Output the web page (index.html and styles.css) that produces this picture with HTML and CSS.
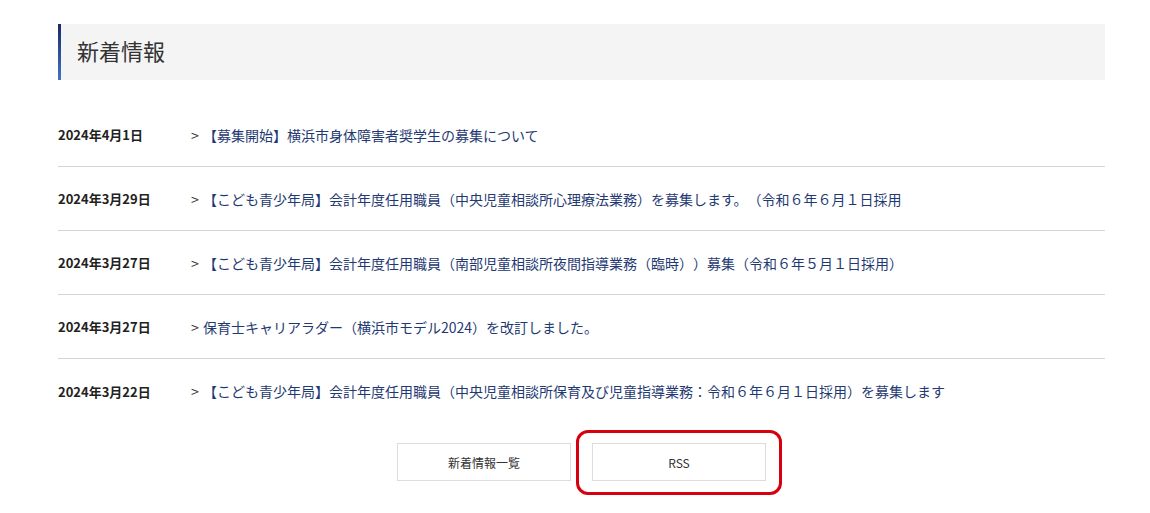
FILE: index.html
```html
<!DOCTYPE html>
<html lang="ja">
<head>
    <meta charset="UTF-8">
    <meta name="viewport" content="width=device-width, initial-scale=1.0">
    <title>新着情報</title>
    <link rel="stylesheet" href="styles.css">
</head>
<body>
    <div class="news">
        <h2 class="news-title">新着情報</h2>
        <ul class="news-list">
            <li class="news-item">
                <span class="news-date">2024年4月1日</span>
                <a class="news-link" href="#">【募集開始】横浜市身体障害者奨学生の募集について</a>
            </li>
            <li class="news-item">
                <span class="news-date">2024年3月29日</span>
                <a class="news-link" href="#">【こども青少年局】会計年度任用職員（中央児童相談所心理療法業務）を募集します。（令和６年６月１日採用</a>
            </li>
            <li class="news-item">
                <span class="news-date">2024年3月27日</span>
                <a class="news-link" href="#">【こども青少年局】会計年度任用職員（南部児童相談所夜間指導業務（臨時））募集（令和６年５月１日採用）</a>
            </li>
            <li class="news-item">
                <span class="news-date">2024年3月27日</span>
                <a class="news-link" href="#">保育士キャリアラダー（横浜市モデル2024）を改訂しました。</a>
            </li>
            <li class="news-item">
                <span class="news-date">2024年3月22日</span>
                <a class="news-link" href="#">【こども青少年局】会計年度任用職員（中央児童相談所保育及び児童指導業務：令和６年６月１日採用）を募集します</a>
            </li>
        </ul>
        <div class="news-buttons">
            <a class="btn" href="#">新着情報一覧</a>
            <a class="btn btn-marked" href="#">RSS</a>
        </div>
    </div>
</body>
</html>
```

FILE: styles.css
```css
body {
    font-family: "Noto Sans CJK JP", "Noto Sans", sans-serif;
    color: #222222;
    background: #ffffff;
    margin: 0;
    padding: 24px 0 32px 58px;
    text-spacing-trim: space-all;
}

.news {
    width: 1047px;
}

.news-title {
    position: relative;
    margin: 0;
    height: 56px;
    line-height: 52px;
    padding-left: 19px;
    background-color: #f4f4f4;
    font-size: 22px;
    font-weight: normal;
    color: #333333;
}

.news-title::before {
    content: "";
    position: absolute;
    left: 0;
    top: 0;
    bottom: 0;
    width: 3px;
    background: linear-gradient(#1b2a66, #3e74c4);
}

.news-list {
    list-style: none;
    margin: 23px 0 0;
    padding: 0;
}

.news-item {
    display: flex;
    align-items: center;
    height: 64px;
    border-bottom: 1px solid #d4d4d4;
    box-sizing: border-box;
}

.news-item:last-child {
    border-bottom: none;
}

.news-date {
    width: 133px;
    flex-shrink: 0;
    font-size: 13px;
    font-weight: bold;
    color: #222222;
}

.news-link {
    font-size: 14px;
    color: #1f3a72;
    text-decoration: none;
}

.news-link::before {
    content: ">";
    display: inline-block;
    width: 12px;
    color: #333333;
}

.news-buttons {
    display: flex;
    justify-content: center;
    gap: 21px;
    margin-top: 20px;
}

.btn {
    display: flex;
    align-items: center;
    justify-content: center;
    width: 174px;
    height: 38px;
    box-sizing: border-box;
    border: 1px solid #dddddd;
    font-size: 12px;
    color: #333333;
    text-decoration: none;
}

.btn-marked {
    position: relative;
}

.btn-marked::after {
    content: "";
    position: absolute;
    left: -17px;
    top: -14px;
    width: 206px;
    height: 65px;
    box-sizing: border-box;
    border: 3px solid #d7000f;
    border-radius: 12px;
}
```
